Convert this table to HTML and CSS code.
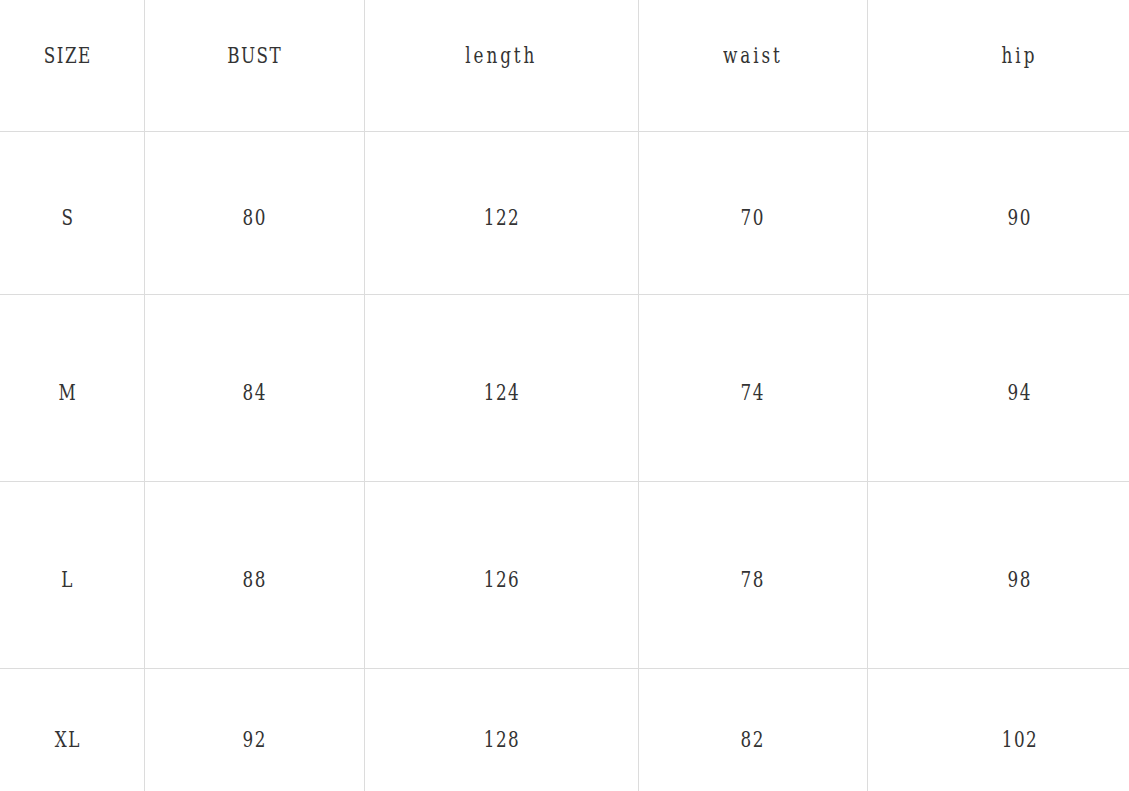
FILE: index.html
```html
<!DOCTYPE html>
<html>
<head>
<meta charset="utf-8">
<link rel="stylesheet" href="styles.css">
</head>
<body>
<div class="table">
  <div class="cell head first-col"><span>SIZE</span></div>
  <div class="cell head"><span>BUST</span></div>
  <div class="cell head"><span class="lower">length</span></div>
  <div class="cell head"><span class="lower">waist</span></div>
  <div class="cell head last-col"><span class="lower">hip</span></div>

  <div class="cell first-col"><span>S</span></div>
  <div class="cell"><span>80</span></div>
  <div class="cell"><span>122</span></div>
  <div class="cell"><span>70</span></div>
  <div class="cell last-col"><span>90</span></div>

  <div class="cell first-col"><span>M</span></div>
  <div class="cell"><span>84</span></div>
  <div class="cell"><span>124</span></div>
  <div class="cell"><span>74</span></div>
  <div class="cell last-col"><span>94</span></div>

  <div class="cell first-col"><span>L</span></div>
  <div class="cell"><span>88</span></div>
  <div class="cell"><span>126</span></div>
  <div class="cell"><span>78</span></div>
  <div class="cell last-col"><span>98</span></div>

  <div class="cell last-row first-col"><span>XL</span></div>
  <div class="cell last-row"><span>92</span></div>
  <div class="cell last-row"><span>128</span></div>
  <div class="cell last-row"><span>82</span></div>
  <div class="cell last-row last-col"><span>102</span></div>
</div>
</body>
</html>
```
FILE: styles.css
```css
html, body {
  margin: 0;
  padding: 0;
  background: #ffffff;
  overflow: hidden;
  width: 1129px;
  height: 791px;
}

.table {
  display: grid;
  grid-template-columns: 145px 220px 274px 229px 303px;
  grid-template-rows: 132px 163px 187px 187px 140px;
  width: 1171px;
}

.cell {
  display: flex;
  align-items: center;
  justify-content: center;
  border-right: 1px solid #dcdcdc;
  border-bottom: 1px solid #dcdcdc;
  padding-top: 7px;
  font-family: "DejaVu Serif", "Liberation Serif", serif;
  font-size: 23px;
  color: #333333;
}

.cell.head {
  padding-top: 0;
  padding-bottom: 22px;
}

.cell.first-col {
  padding-right: 8px;
}

.cell.last-col {
  border-right: none;
}

.cell.last-row {
  border-bottom: none;
  padding-top: 4px;
  padding-bottom: 4px;
}

.cell span {
  display: inline-block;
  transform: scaleX(0.73);
  letter-spacing: 2px;
}

.cell span.lower {
  letter-spacing: 4px;
}
```
